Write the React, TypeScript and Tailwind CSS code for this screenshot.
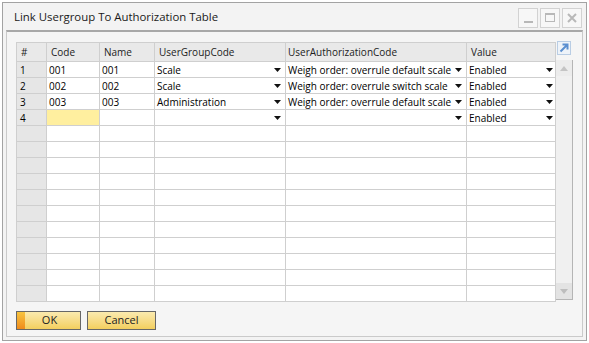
import React from 'react';

type Row = {
    code: string
    name: string
    group: string
    auth: string
    value: string
    active?: boolean
}

const rows: Row[] = [
    { code: '001', name: '001', group: 'Scale', auth: 'Weigh order: overrule default scale', value: 'Enabled' },
    { code: '002', name: '002', group: 'Scale', auth: 'Weigh order: overrule switch scale', value: 'Enabled' },
    { code: '003', name: '003', group: 'Administration', auth: 'Weigh order: overrule default scale', value: 'Enabled' },
    { code: '', name: '', group: '', auth: '', value: 'Enabled', active: true },
];

const emptyRows = Array.from({ length: 11 });

const Arrow = () => (
    <svg width="7" height="4" viewBox="0 0 7 4" className="shrink-0">
        <path d="M0 0 H7 L3.5 4 Z" fill="#111" />
    </svg>
);

const cell = "h-[16px] border-r border-b border-[#cfcfcf] flex items-center text-[10px] leading-none whitespace-nowrap overflow-hidden";

export default function App() {
    return (
        <div className="w-[589px] h-[343px] bg-white pt-[2px] pl-[2px]" style={{ fontFamily: '"Open Sans", "Noto Sans", sans-serif' }}>
            <div className="w-[585px] h-[339px] border border-[#a3a3a3] bg-[#f3f3f3] flex flex-col">
                {/* title bar */}
                <div className="h-[27px] flex items-center justify-between pl-[11px] pr-[4px] shrink-0">
                    <span className="text-[11.4px] text-[#1a1a1a] pt-[1px]">Link Usergroup To Authorization Table</span>
                    <div className="flex gap-[2px] mt-[2px]">
                        <div className="w-[20px] h-[20px] border border-[#d2d2d2] bg-[#f7f7f7] flex items-end justify-center pb-[4px]">
                            <div className="w-[9px] h-[2px] bg-[#b8b8b8]" />
                        </div>
                        <div className="w-[20px] h-[20px] border border-[#d2d2d2] bg-[#f7f7f7] flex items-center justify-center">
                            <div className="w-[10px] h-[9px] border border-t-2 border-[#b8b8b8]" />
                        </div>
                        <div className="w-[20px] h-[20px] border border-[#d2d2d2] bg-[#f7f7f7] flex items-center justify-center">
                            <svg width="10" height="10" viewBox="0 0 10 10">
                                <path d="M1 1 L9 9 M9 1 L1 9" stroke="#b8b8b8" strokeWidth="2" />
                            </svg>
                        </div>
                    </div>
                </div>

                {/* content panel */}
                <div className="mx-[3px] mb-[3px] flex-1 flex flex-col border-t-2 border-t-[#a8a8a8] border-x border-b border-[#cacaca] bg-[#f5f5f5] pl-[9px] pt-[10px]">
                    <div className="flex">
                        <div className="border-l border-t border-[#cfcfcf] w-[540px]">
                            {/* header */}
                            <div className="flex bg-[#e9e9e9] text-[#222]">
                                <div className={`${cell} h-[19px] w-[30px] pl-[4px]`}>#</div>
                                <div className={`${cell} h-[19px] w-[53px] pl-[4px]`}>Code</div>
                                <div className={`${cell} h-[19px] w-[55px] pl-[4px]`}>Name</div>
                                <div className={`${cell} h-[19px] w-[131px] pl-[4px]`}>UserGroupCode</div>
                                <div className={`${cell} h-[19px] w-[181px] pl-[2px]`}>UserAuthorizationCode</div>
                                <div className={`${cell} h-[19px] w-[89px] pl-[4px]`}>Value</div>
                            </div>
                            {rows.map((r, i) => (
                                <div key={i} className="flex bg-white text-black">
                                    <div className={`${cell} w-[30px] pl-[3px] bg-[#e6e6e6]`}>{i + 1}</div>
                                    <div className={`${cell} w-[53px] pl-[2px] ${r.active ? 'bg-[#ffef9f]' : ''}`}>{r.code}</div>
                                    <div className={`${cell} w-[55px] pl-[2px]`}>{r.name}</div>
                                    <div className={`${cell} w-[131px] pl-[2px] pr-[4px] justify-between`}>
                                        <span>{r.group}</span>
                                        <Arrow />
                                    </div>
                                    <div className={`${cell} w-[181px] pl-[2px] pr-[4px] justify-between`}>
                                        <span>{r.auth}</span>
                                        <Arrow />
                                    </div>
                                    <div className={`${cell} w-[89px] pl-[2px] pr-[2px] justify-between`}>
                                        <span>{r.value}</span>
                                        <Arrow />
                                    </div>
                                </div>
                            ))}
                            {emptyRows.map((_, i) => (
                                <div key={i} className="flex bg-white">
                                    <div className={`${cell} w-[30px] bg-[#e6e6e6]`} />
                                    <div className={`${cell} w-[53px]`} />
                                    <div className={`${cell} w-[55px]`} />
                                    <div className={`${cell} w-[131px]`} />
                                    <div className={`${cell} w-[181px]`} />
                                    <div className={`${cell} w-[89px]`} />
                                </div>
                            ))}
                        </div>

                        {/* right side: expand icon + scrollbar */}
                        <div className="flex flex-col">
                            <div className="h-[19px] flex items-start pl-[1px] -mt-[1px]">
                                <div className="w-[14px] h-[14px] border border-[#b9cde4] bg-[#eef3f9] flex items-center justify-center">
                                    <svg width="10" height="10" viewBox="0 0 10 10">
                                        <path d="M1.5 8.5 L8 2 M3.5 1.5 H8.5 V6.5" stroke="#5b8fd0" strokeWidth="2" fill="none" />
                                    </svg>
                                </div>
                            </div>
                            <div className="w-[17px] h-[240px] bg-[#f0f0f0] border-r border-b border-[#b5b5b5] flex flex-col justify-between">
                                <div className="w-[16px] h-[16px] bg-[#ececec] flex items-center justify-center">
                                    <svg width="8" height="5" viewBox="0 0 8 5"><path d="M0 5 L4 0 L8 5 Z" fill="#c4c4c4" /></svg>
                                </div>
                                <div className="w-[16px] h-[16px] bg-[#e3e3e3] flex items-center justify-center">
                                    <svg width="8" height="5" viewBox="0 0 8 5"><path d="M0 0 L8 0 L4 5 Z" fill="#bdbdbd" /></svg>
                                </div>
                            </div>
                        </div>
                    </div>

                    {/* buttons */}
                    <div className="flex gap-[6px] mt-[9px]">
                        <button className="relative w-[65px] h-[19px] border border-[#676767] bg-gradient-to-b from-[#fbeaae] to-[#f3cf5d] text-[11px] text-[#222] flex items-center justify-center overflow-hidden">
                            <span className="absolute left-0 top-0 bottom-0 w-[8px] bg-gradient-to-b from-[#f7c43f] to-[#ef8b1a]" />
                            <span className="pl-[2px]">OK</span>
                        </button>
                        <button className="w-[69px] h-[19px] border border-[#676767] bg-gradient-to-b from-[#fbeaae] to-[#f3cf5d] text-[11px] text-[#222] flex items-center justify-center">
                            Cancel
                        </button>
                    </div>
                </div>
            </div>
        </div>
    );
}
